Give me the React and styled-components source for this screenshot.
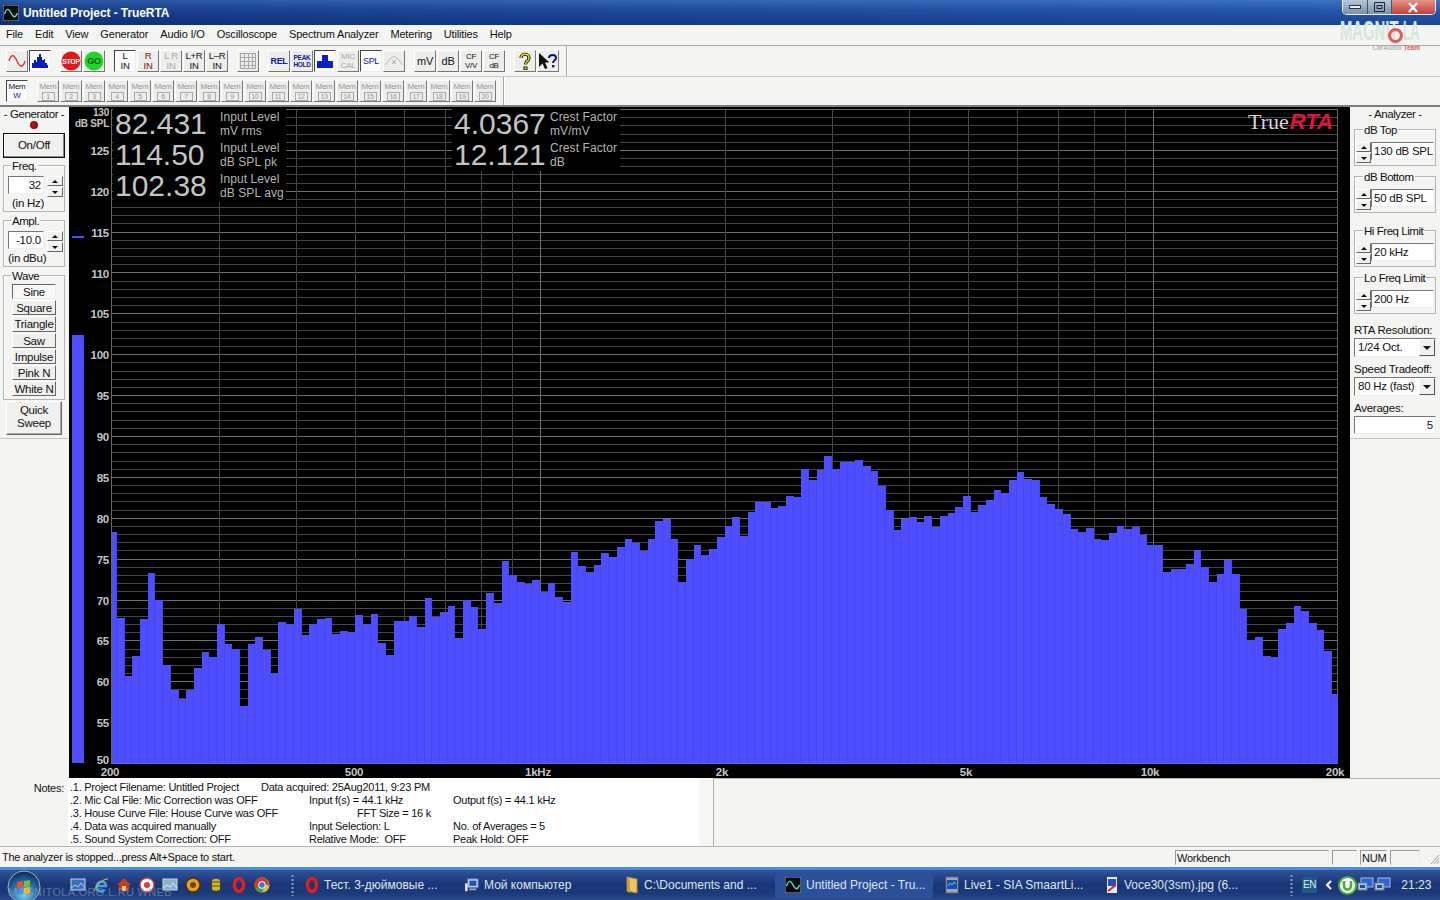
import React from "react";
import styled, { createGlobalStyle } from "styled-components";

const GlobalStyle = createGlobalStyle`
  html, body { margin: 0; padding: 0; background: #f4f4f2; }
  * { box-sizing: border-box; }
`;

const Window = styled.div`
  position: relative;
  width: 1440px;
  height: 900px;
  overflow: hidden;
  display: flex;
  flex-direction: column;
  background: #f4f4f2;
  color: #111;
  font: 11.5px/14px "Liberation Sans", Arial, sans-serif;
  letter-spacing: -0.25px;
`;

/* title bar */
const TitleBar = styled.div`
  height: 25px;
  flex: none;
  display: flex;
  align-items: center;
  padding-left: 3px;
  gap: 4px;
  color: #fff;
  font-size: 12px;
  font-weight: bold;
  letter-spacing: -0.08px;
  background:
    linear-gradient(90deg, rgba(8, 30, 100, 0.35), rgba(60, 120, 210, 0.25)),
    linear-gradient(180deg, #3f74c4 0%, #1f4f9e 40%, #0f3484 100%);
`;
const WinButtons = styled.div`
  margin-left: auto;
  margin-right: 4px;
  align-self: flex-start;
  width: 94px;
  height: 15px;
  display: flex;
  border: 1px solid #e8eef8;
  border-top: none;
  border-radius: 0 0 5px 5px;
  overflow: hidden;
`;
const WinBtn = styled.div`
  width: ${p => p.$w}px;
  display: flex;
  align-items: center;
  justify-content: center;
  background: ${p => p.$close
    ? "linear-gradient(180deg,#e89088,#c2413a)"
    : "linear-gradient(180deg,#b8c8d8,#7890a8)"};
  border-right: 1px solid #47586c;
  &:last-child { border-right: none; }
`;

/* menu */
const MenuBar = styled.div`
  height: 21px;
  flex: none;
  display: flex;
  align-items: center;
  gap: 12px;
  padding: 0 0 2px 6px;
  border-bottom: 1px solid #a9a9a9;
  font-size: 11px;
  letter-spacing: -0.17px;
`;

/* toolbars */
const ToolRow = styled.div`
  height: ${p => p.$h}px;
  flex: none;
  display: flex;
  align-items: center;
  gap: 9px;
  padding-left: 6px;
  border-bottom: ${p => (p.$line ? "1px solid #c8c8c8" : "none")};
`;
const ToolGroup = styled.div`
  display: flex;
  gap: 1px;
`;
const ToolDivider = styled.div`
  align-self: stretch;
  width: 2px;
  margin-left: -2px;
  border-left: 1px solid #a8a8a8;
  border-right: 1px solid #fff;
`;
const ToolBtn = styled.div`
  width: 22px;
  height: 22px;
  display: flex;
  flex-direction: column;
  align-items: center;
  justify-content: center;
  font-size: ${p => p.$size || 9.5}px;
  line-height: ${p => (p.$size ? p.$size + 1 : 10)}px;
  font-weight: ${p => (p.$bold ? "bold" : "normal")};
  letter-spacing: -0.3px;
  white-space: nowrap;
  color: ${p => p.$tone || "#111"};
  background: ${p => (p.$down ? "#fbfbfb" : "#ededeb")};
  border: 1px solid;
  border-color: ${p => (p.$down ? "#444 #eee #eee #444" : "#fff #777 #777 #fff")};
`;
const MemBox = styled.span`
  display: block;
  width: 13px;
  height: 9px;
  margin-top: 1px;
  border: 1px solid #aaa;
  font-size: 7px;
  line-height: 7px;
  text-align: center;
  color: #999;
`;
const MemWLetter = styled.span`
  color: #10189c;
`;

/* main area */
const Main = styled.div`
  height: 673px;
  flex: none;
  display: flex;
  border-top: 2px solid #7c7c7c;
`;
const Panel = styled.div`
  flex: none;
  width: ${p => p.$w}px;
  display: flex;
  flex-direction: column;
  padding: 0 ${p => p.$pr}px 0 ${p => p.$pl}px;
`;
const PanelTitle = styled.div`
  height: 14px;
  text-align: center;
  white-space: nowrap;
  letter-spacing: -0.4px;
`;
const Led = styled.div`
  width: 8px;
  height: 8px;
  margin: 0 auto;
  border-radius: 50%;
  background: radial-gradient(circle at 40% 40%, #b02020, #6a0808);
`;
const PanelEnd = styled.div`
  margin: ${p => p.$mt}px -${p => p.$pl}px 0;
  border-top: 1px solid #c4c4c4;
`;
const BigButton = styled.div`
  flex: none;
  height: ${p => p.$h}px;
  margin: ${p => p.$mt}px ${p => p.$mx || 0}px 0 ${p => p.$mx || 0}px;
  padding-bottom: ${p => p.$pb || 0}px;
  display: flex;
  align-items: center;
  justify-content: center;
  text-align: center;
  line-height: 13px;
  background: #f0f0ee;
  border: 1px solid;
  border-color: ${p => (p.$dark ? "#111" : "#fff #666 #666 #fff")};
  box-shadow: ${p => (p.$dark
    ? "inset -1px -1px 0 #888, inset 1px 1px 0 #fff"
    : "inset -1px -1px 0 #aaa")};
`;
const Group = styled.div`
  position: relative;
  flex: none;
  height: ${p => p.$h}px;
  margin-top: ${p => p.$mt}px;
  padding: ${p => p.$pt}px ${p => p.$px}px 0;
  border: 1px solid #b4b4b4;
  box-shadow: inset 1px 1px 0 #fff;
`;
const Legend = styled.span`
  position: absolute;
  top: -7px;
  left: ${p => p.$left}px;
  padding: 0 1px;
  background: #f4f4f2;
  white-space: nowrap;
  letter-spacing: -0.45px;
`;
const SpinRow = styled.div`
  display: flex;
  align-items: flex-start;
  gap: ${p => p.$gap}px;
`;
const Field = styled.div`
  flex: ${p => (p.$w ? "none" : 1)};
  width: ${p => (p.$w ? p.$w + "px" : "auto")};
  height: 18px;
  padding: 0 2px;
  line-height: 17px;
  text-align: ${p => p.$align || "left"};
  white-space: nowrap;
  overflow: hidden;
  background: #fff;
  border: 1px solid;
  border-color: #777 #eee #eee #777;
`;
const Spin = styled.div`
  flex: none;
  width: ${p => p.$w}px;
  display: flex;
  flex-direction: column;
  gap: 1px;
`;
const SpinBtn = styled.div`
  height: 10px;
  display: flex;
  align-items: center;
  justify-content: center;
  background: #f0f0ee;
  border: 1px solid;
  border-color: #fff #666 #666 #fff;
  &::after {
    content: "";
    border-left: 3px solid transparent;
    border-right: 3px solid transparent;
    ${p => (p.$up ? "border-bottom" : "border-top")}: 3px solid #111;
  }
`;
const Caption = styled.div`
  margin: ${p => p.$mt}px 0 0 ${p => p.$ml}px;
  white-space: nowrap;
`;
const WaveList = styled.div`
  display: flex;
  flex-direction: column;
  gap: 1px;
`;
const WaveBtn = styled.div`
  height: 15.2px;
  line-height: 14px;
  text-align: center;
  white-space: nowrap;
  background: ${p => (p.$down ? "#f8f8f8" : "#efefed")};
  border: 1px solid;
  border-color: ${p => (p.$down ? "#666 #eee #eee #666" : "#fff #666 #666 #fff")};
`;
const FieldLabel = styled.div`
  flex: none;
  height: 15px;
  margin-top: ${p => p.$mt}px;
  white-space: nowrap;
`;
const Select = styled.div`
  flex: none;
  height: 19px;
  display: flex;
  padding-left: 3px;
  line-height: 17px;
  background: #fff;
  border: 1px solid;
  border-color: #777 #eee #eee #777;
`;
const SelectArrow = styled.div`
  width: 16px;
  margin-left: auto;
  display: flex;
  align-items: center;
  justify-content: center;
  background: #f0f0ee;
  border: 1px solid;
  border-color: #fff #555 #555 #fff;
  &::after {
    content: "";
    border-left: 4px solid transparent;
    border-right: 4px solid transparent;
    border-top: 4px solid #111;
  }
`;

/* chart */
const ChartPane = styled.div`
  position: relative;
  flex: 1;
  background: #000;
`;
const ChartSvg = styled.svg`
  display: block;
`;
const Readouts = styled.div`
  position: absolute;
  top: 2px;
  left: ${p => p.$left}px;
  background: #000;
  color: #c4c4c4;
`;
const ReadoutRow = styled.div`
  height: 31px;
  display: flex;
`;
const ReadoutValue = styled.div`
  width: ${p => p.$w}px;
  padding-left: 2px;
  font-size: 30px;
  line-height: 29px;
  letter-spacing: 0;
`;
const ReadoutLabel = styled.div`
  width: ${p => p.$w}px;
  padding-top: 1px;
  font-size: 12px;
  line-height: 14px;
  letter-spacing: 0.08px;
  color: #b4b4b4;
  white-space: nowrap;
`;
const BrandMark = styled.div`
  position: absolute;
  top: 3px;
  right: 17px;
  display: flex;
  align-items: baseline;
  letter-spacing: 0;
  line-height: 24px;
`;
const BrandTrue = styled.span`
  font: 22px/24px "Liberation Serif", "Times New Roman", serif;
  color: #d4d4d4;
`;
const BrandRta = styled.span`
  font: italic bold 22px/24px "Liberation Sans", Arial, sans-serif;
  color: #e5103c;
  margin-left: 1px;
`;

/* notes */
const NotesBar = styled.div`
  height: 69px;
  flex: none;
  display: flex;
  border-bottom: 1px solid #b4b4b4;
`;
const NotesTitle = styled.div`
  width: 68px;
  padding: 3px 4px 0 0;
  text-align: right;
  font-size: 11px;
`;
const NotesBody = styled.div`
  width: 631px;
  padding: 3px 0 0 2px;
  background: #fff;
  font-size: 11px;
  line-height: 13px;
  letter-spacing: -0.25px;
`;
const NotesStrip = styled.div`
  width: 15px;
  background: #f6f6f4;
  border-right: 1px solid #b0b0b0;
`;
const NotesEmpty = styled.div`
  flex: 1;
  border-top: 1px solid #b4b4b4;
`;
const NoteLine = styled.div`
  height: 13px;
  display: flex;
  white-space: nowrap;
`;
const NoteCell = styled.span`
  flex: none;
  width: ${p => p.$w}px;
  padding-left: ${p => p.$pl || 0}px;
`;

/* status bar */
const StatusBar = styled.div`
  height: 20px;
  flex: none;
  display: flex;
  align-items: center;
  padding-left: 2px;
  font-size: 11px;
`;
const StatusPane = styled.div`
  flex: none;
  width: ${p => p.$w}px;
  height: 15px;
  margin-left: ${p => p.$ml}px;
  padding-left: 1px;
  line-height: 14px;
  border: 1px solid;
  border-color: #999 #eee #eee #999;
`;
const StatusText = styled.div`
  width: 1173px;
`;
const Grip = styled.svg`
  margin: 4px 0 0 10px;
`;

/* taskbar */
const TaskBar = styled.div`
  position: relative;
  height: 33px;
  flex: none;
  display: flex;
  align-items: center;
  color: #dfe6f5;
  font-size: 12px;
  letter-spacing: 0;
  border-top: 3px solid #4a8ce0;
  background: linear-gradient(180deg, #2f5298 0%, #1a3574 50%, #1c3a7c 80%, #2a4a8c 100%);
`;
const OrbSlot = styled.div`
  width: 68px;
  flex: none;
  padding-left: 6px;
  display: flex;
`;
const QuickLaunch = styled.div`
  width: 227px;
  flex: none;
  display: flex;
  align-items: center;
  gap: 7px;
  padding-left: 2px;
`;
const Dots = styled.div`
  width: 3px;
  height: 22px;
  margin-left: ${p => p.$ml || 0}px;
  background: radial-gradient(circle, #8fa4c8 1px, transparent 1.2px) 0 0 / 3px 4px;
`;
const TaskButton = styled.div`
  flex: none;
  width: 158px;
  height: 28px;
  margin-right: 2px;
  display: flex;
  align-items: center;
  gap: 5px;
  padding-left: 10px;
  white-space: nowrap;
  border-radius: 2px;
  background: ${p => (p.$active ? "#2b4f98" : "transparent")};
`;
const Tray = styled.div`
  margin-left: 35px;
  display: flex;
  align-items: center;
`;
const TrayLang = styled.span`
  margin-left: 9px;
  padding: 1px;
  font-size: 10px;
  letter-spacing: -0.3px;
  background: #1d5a84;
`;
const TrayGap = styled.span`
  width: ${p => p.$w}px;
`;
const Clock = styled.span`
  margin-left: 10px;
`;
const Watermark = styled.div`
  position: absolute;
  left: 8px;
  top: 15px;
  font-size: 11px;
  letter-spacing: 0.3px;
  color: #8ea4c4;
  opacity: 0.55;
  white-space: nowrap;
`;

/* logo over the menu */
const SiteLogo = styled.div`
  position: absolute;
  left: 1340px;
  top: 20px;
  width: 82px;
  height: 29px;
`;
const SiteWord = styled.div`
  position: absolute;
  top: 0;
  left: ${p => p.$left}px;
  font: bold 28px/22px "Liberation Sans", Arial, sans-serif;
  letter-spacing: 0;
  color: #d4e8dc;
  white-space: pre;
  transform: scaleX(${p => p.$scale});
  transform-origin: left top;
`;
const SiteRing = styled.div`
  position: absolute;
  left: 48px;
  top: 8px;
  width: 15px;
  height: 15px;
  border: 3px solid #e25a50;
  border-radius: 50%;
`;
const SiteTeam = styled.div`
  position: absolute;
  right: 2px;
  top: 24px;
  font: bold 6.5px/7px "Liberation Sans", Arial, sans-serif;
  letter-spacing: 0;
  color: #b8b8b8;
  white-space: nowrap;
  & b { color: #e25a50; }
`;

const SineIcon = ({ color = "#e03030", size = 18 }) => (
  <svg width={size} height={size} viewBox="0 0 18 18">
    <path d="M1 9C3 2 6 2 9 9s6 7 8 0" fill="none" stroke={color} strokeWidth="1.3" />
  </svg>
);
const SpectrumIcon = () => (
  <svg width="18" height="18" viewBox="0 0 18 18">
    <path d="M1 16V11H3V8H5V10H6V5H8V2H10V5H11V8H13V7H14V11H16V13H17V16Z" fill="#0a1fb8" />
  </svg>
);
const SignIcon = ({ fill, label, color }) => (
  <svg width="20" height="20" viewBox="0 0 20 20">
    <circle cx="10" cy="10" r="9.5" fill={fill} />
    <text x="10" y="13" textAnchor="middle" fontSize={label.length > 2 ? 7 : 9} fontWeight="bold"
      fontFamily="Liberation Sans" fill={color}>{label}</text>
  </svg>
);
const GridIcon = () => (
  <svg width="18" height="18" viewBox="0 0 18 18" shapeRendering="crispEdges">
    <path d="M1.5 1.5h15v15h-15zM5.5 1.5v15M9.5 1.5v15M13.5 1.5v15M1.5 5.5h15M1.5 9.5h15M1.5 13.5h15"
      fill="none" stroke="#a8a8a8" />
  </svg>
);
const BlockIcon = () => (
  <svg width="18" height="18" viewBox="0 0 18 18">
    <path d="M1 16V9H6V3H12V9H17V16Z" fill="#0a1fc8" />
  </svg>
);
const CurveIcon = () => (
  <svg width="20" height="18" viewBox="0 0 20 18">
    <path d="M1 13L7 6Q10 3 13 6L19 13" fill="none" stroke="#bbb" />
    <path d="M8 8l4 4M12 8l-4 4" stroke="#aaa" />
  </svg>
);
const HelpIcon = () => (
  <svg width="18" height="19" viewBox="0 0 18 19">
    <path d="M5 6C5 1 13 1 13 6C13 9 9.5 9 9.5 12.5" fill="none" stroke="#111" strokeWidth="3.2" />
    <path d="M5 6C5 1 13 1 13 6C13 9 9.5 9 9.5 12.5" fill="none" stroke="#f4e020" strokeWidth="1.4" />
    <rect x="7.5" y="14.5" width="4" height="3.5" fill="#111" />
    <rect x="8.5" y="15.3" width="2" height="2" fill="#f4e020" />
  </svg>
);
const WhatIsIcon = () => (
  <svg width="20" height="19" viewBox="0 0 20 19">
    <path d="M1 1V15L4.5 11.5L7 17L9.5 16L7 10.5H11.5Z" fill="#111" />
    <path d="M11 6C11 2 18 2 18 6C18 8.5 15 8.5 15 11" fill="none" stroke="#0d1a70" strokeWidth="2" />
    <rect x="14" y="13" width="2.4" height="2.4" fill="#0d1a70" />
  </svg>
);
const AppIcon = ({ size = 16 }) => (
  <svg width={size} height={size} viewBox="0 0 16 16">
    <rect width="16" height="16" fill="#0a0a0a" stroke="#9aa" />
    <path d="M1.5 9C3.5 3 5.5 3 8 8s4.5 5 6.5 0" fill="none" stroke="#4fe0d0" strokeWidth="1.4" />
  </svg>
);
const OperaIcon = ({ size = 14 }) => (
  <svg width={size} height={16} viewBox="0 0 14 16">
    <ellipse cx="7" cy="8" rx="4.6" ry="6.4" fill="none" stroke="#e0201c" strokeWidth="3.4" />
  </svg>
);
const FolderIcon = () => (
  <svg width="14" height="18" viewBox="0 0 14 18">
    <path d="M2 1L12 3V17L2 15Z" fill="#e8c860" stroke="#a8882c" />
    <path d="M2 1V15L5 17V4Z" fill="#c8a03c" />
  </svg>
);
const PcIcon = () => (
  <svg width="14" height="16" viewBox="0 0 16 16">
    <rect x="3" y="1" width="12" height="10" fill="#c4d4ec" stroke="#5a78a8" />
    <rect x="5" y="3" width="8" height="6" fill="#1c54c8" />
    <rect x="0" y="6" width="3" height="9" fill="#d8dce4" />
    <rect x="5" y="12" width="8" height="2" fill="#a0acbc" />
  </svg>
);
const LiveIcon = () => (
  <svg width="14" height="18" viewBox="0 0 14 18">
    <rect x="1" y="1" width="12" height="16" fill="#9aa8b8" stroke="#667" />
    <rect x="2" y="4" width="10" height="9" fill="#1a48c8" />
    <path d="M3 10l2-3 2 2 2-3 2 2" fill="none" stroke="#50e060" />
  </svg>
);
const PictureIcon = () => (
  <svg width="14" height="18" viewBox="0 0 14 18">
    <path d="M2 1H12V17H2Z" fill="#e8ecf4" />
    <rect x="3" y="3" width="8" height="7" fill="#2850b8" />
    <path d="M3 15L11 9" stroke="#d02828" strokeWidth="2" />
  </svg>
);
const StartOrb = () => (
  <svg width="36" height="30" viewBox="0 0 36 30">
    <defs>
      <radialGradient id="orb" cx="50%" cy="75%" r="70%">
        <stop offset="0" stopColor="#7ed0f0" />
        <stop offset="0.55" stopColor="#2a70a8" />
        <stop offset="1" stopColor="#0f3060" />
      </radialGradient>
    </defs>
    <circle cx="18" cy="17" r="16" fill="url(#orb)" stroke="#9ab4cc" />
    <path d="M11 12l6-1v6l-6 1z" fill="#e8502c" />
    <path d="M18 11l6-1v6l-6 1z" fill="#70c040" />
    <path d="M11 19l6-1v6l-6 1z" fill="#3090e0" />
    <path d="M18 18l6-1v6l-6 1z" fill="#f4c020" />
  </svg>
);
const Dot = ({ fill, ring, inner }) => (
  <svg width="16" height="16" viewBox="0 0 16 16">
    <circle cx="8" cy="8" r="7" fill={fill} stroke={ring} strokeWidth="1.4" />
    {inner && <circle cx="8" cy="8" r="3" fill={inner} />}
  </svg>
);
const TileIcon = ({ fill, line }) => (
  <svg width="16" height="16" viewBox="0 0 16 16">
    <rect x="1" y="2" width="14" height="11" fill={fill} stroke="#c8d4e4" />
    <path d="M1 11l4-3 3 2 3-4 4 5" fill="none" stroke={line} />
  </svg>
);
const IeIcon = () => (
  <svg width="16" height="16" viewBox="0 0 16 16">
    <path d="M3 9h10C13 4 6 3 4 8s3 8 8 5" fill="none" stroke="#4aa0e8" strokeWidth="2.4" />
    <path d="M1 14C4 7 10 2 15 2" fill="none" stroke="#f0c040" />
  </svg>
);
const HouseIcon = () => (
  <svg width="16" height="16" viewBox="0 0 16 16">
    <path d="M8 1l7 7h-2v6H3V8H1z" fill="#c83a20" />
    <rect x="6" y="9" width="4" height="5" fill="#f4d060" />
  </svg>
);
const BugIcon = () => (
  <svg width="16" height="16" viewBox="0 0 14 16">
    <rect x="3" y="2" width="8" height="12" rx="3" fill="#d8b820" />
    <path d="M0 5h14M0 9h14M3 14h8" stroke="#5a4808" />
  </svg>
);
const ChromeIcon = () => (
  <svg width="16" height="16" viewBox="0 0 16 16">
    <circle cx="8" cy="8" r="7.5" fill="#e0c030" />
    <path d="M8 .5A7.5 7.5 0 0 0 1.5 12L8 8h7A7.5 7.5 0 0 0 8 .5z" fill="#d83828" />
    <path d="M1.5 12A7.5 7.5 0 0 0 8 15.5L11 9 8 8z" fill="#40a048" />
    <circle cx="8" cy="8" r="3.4" fill="#3a78d8" stroke="#fff" />
  </svg>
);
const TorrentIcon = () => (
  <svg width="19" height="19" viewBox="0 0 19 19">
    <circle cx="9.5" cy="9.5" r="8.5" fill="#fff" stroke="#48b030" strokeWidth="2" />
    <path d="M6 5v5a3.5 3.5 0 0 0 7 0V5" fill="none" stroke="#48b030" strokeWidth="2.6" />
  </svg>
);
const NetIcon = () => (
  <svg width="17" height="16" viewBox="0 0 17 16">
    <rect x="4" y="1" width="12" height="9" fill="#2a64d8" stroke="#a8bcd8" />
    <rect x="1" y="6" width="9" height="7" fill="#b8c4d4" stroke="#6a7c98" />
    <rect x="3" y="8" width="5" height="3" fill="#1c48a8" />
  </svg>
);
const Chevron = () => (
  <svg width="10" height="12" viewBox="0 0 10 12">
    <path d="M7 2L3 6l4 4" fill="none" stroke="#fff" strokeWidth="2" />
  </svg>
);

const tool = (children, props = {}) => ({ children, props });
const twoLine = (a, b, props) => tool(<><span>{a}</span><span>{b}</span></>, props);

const toolGroups = [
  [tool(<SineIcon />), tool(<SpectrumIcon />, { $down: true })],
  [tool(<SignIcon fill="#e01818" label="STOP" color="#fff" />), tool(<SignIcon fill="#22d628" label="GO" color="#0a5a10" />)],
  [
    twoLine("L", "IN", { $down: true }),
    twoLine("R", "IN", { $tone: "#8a1010" }),
    twoLine("L  R", "IN", { $tone: "#aaa" }),
    twoLine("L+R", "IN"),
    twoLine("L–R", "IN"),
  ],
  [tool(<GridIcon />)],
  [
    tool("REL", { $bold: true, $size: 9, $tone: "#10189c" }),
    twoLine("PEAK", "HOLD", { $bold: true, $size: 6.5, $tone: "#10189c" }),
    tool(<BlockIcon />, { $down: true }),
    twoLine("MIC", "CAL", { $size: 8, $tone: "#aaa" }),
    tool("SPL", { $down: true, $size: 9, $tone: "#10189c" }),
    tool(<CurveIcon />),
  ],
  [
    tool("mV", { $size: 11 }),
    tool("dB", { $size: 11 }),
    twoLine("CF", "V/V", { $size: 8 }),
    twoLine("CF", "dB", { $size: 8 }),
  ],
  [tool(<HelpIcon />), tool(<WhatIsIcon />)],
];

const memSlots = Array.from({ length: 20 }, (_, i) => i + 1);

const menus = ["File", "Edit", "View", "Generator", "Audio I/O", "Oscilloscope", "Spectrum Analyzer", "Metering", "Utilities", "Help"];
const waves = ["Sine", "Square", "Triangle", "Saw", "Impulse", "Pink N", "White N"];

const PLOT_LEFT = 112;
const PLOT_RIGHT = 1338;
const PLOT_TOP = 109;
const PLOT_BOTTOM = 763;
const DB_PX = 8.175;
const BAR_STEP = 7.69;

// bar tops read off the picture, in page pixels
const barTops = [
  532, 618, 676, 656, 619, 573, 600, 665, 690, 699, 690, 668, 652, 657, 624, 644, 649, 706, 644, 637,
  650, 673, 622, 624, 609, 635, 624, 619, 618, 634, 631, 632, 615, 624, 614, 643, 655, 621, 621, 616,
  627, 598, 617, 612, 606, 638, 600, 607, 629, 593, 603, 561, 575, 582, 584, 580, 592, 583, 597, 602,
  552, 566, 572, 565, 553, 557, 547, 539, 543, 551, 539, 521, 519, 539, 582, 559, 545, 555, 549, 537,
  526, 517, 536, 512, 502, 502, 508, 506, 496, 497, 469, 480, 470, 456, 469, 462, 462, 460, 466, 471,
  486, 510, 530, 519, 517, 522, 516, 527, 516, 513, 507, 496, 512, 505, 500, 490, 493, 480, 472, 479,
  480, 497, 504, 509, 514, 529, 532, 528, 539, 540, 533, 526, 529, 527, 535, 545, 545, 572, 569, 569,
  564, 550, 567, 582, 574, 560, 574, 609, 640, 637, 656, 657, 629, 623, 606, 611, 623, 630, 651, 694,
];

const dbY = db => PLOT_BOTTOM - (db - 50) * DB_PX;
const freqX = f => PLOT_LEFT + ((PLOT_RIGHT - PLOT_LEFT) / 2) * Math.log10(f / 200);

const dbLines = Array.from({ length: 81 }, (_, i) => 50 + i);
const dbLabels = Array.from({ length: 16 }, (_, i) => 50 + i * 5);
const freqLines = [300, 400, 500, 600, 700, 800, 900, 1000, 2000, 3000, 4000, 5000, 6000, 7000, 8000, 9000, 10000];
const freqLabels = [["200", 110], ["500", 354], ["1kHz", 538], ["2k", 722], ["5k", 966], ["10k", 1150], ["20k", 1335]];
const axisText = { fontFamily: "Liberation Sans", fontWeight: "bold", fontSize: 11.5, fill: "#c4c4c4" };
const topAxisText = { ...axisText, fontSize: 10 };

const Chart = () => (
  <ChartSvg width="1281" height="671" viewBox="69 107 1281 671">
    <g shapeRendering="crispEdges">
      {dbLines.map(db => (
        <line key={db} x1={PLOT_LEFT} x2={PLOT_RIGHT} y1={Math.round(dbY(db))} y2={Math.round(dbY(db))}
          stroke={db % 5 === 0 ? "#6e6e6e" : "#464646"} />
      ))}
      {freqLines.map(f => (
        <line key={f} x1={freqX(f)} x2={freqX(f)} y1={PLOT_TOP} y2={PLOT_BOTTOM}
          stroke={f === 1000 || f === 10000 ? "#6e6e6e" : "#444"} />
      ))}
      <rect x={PLOT_LEFT - 0.5} y={PLOT_TOP} width={PLOT_RIGHT - PLOT_LEFT} height={PLOT_BOTTOM - PLOT_TOP}
        fill="none" stroke="#666" />
      {barTops.map((top, i) => {
        const x = i === 0 ? PLOT_LEFT : 117 + (i - 1) * BAR_STEP;
        const next = Math.min(117 + i * BAR_STEP, PLOT_RIGHT);
        return (
          <g key={i}>
            <rect x={x} y={top} width={next - x} height={PLOT_BOTTOM + 1 - top} fill="#4e4eff" />
            <rect x={next - 1} y={top + 1} width="1" height={PLOT_BOTTOM - top} fill="#4646f6" />
          </g>
        );
      })}
      <rect x={PLOT_LEFT} y={PLOT_BOTTOM} width={PLOT_RIGHT - PLOT_LEFT} height="1" fill="#5c5cff" />
      <rect x="72" y="335" width="12" height="428" fill="#4e4eff" />
      <rect x="72" y="236" width="12" height="2" fill="#4e4eff" />
    </g>
    {dbLabels.map(db => (
      <text key={db} x="109" y={db === 50 ? 764 : dbY(db) + 5} textAnchor="end" {...axisText}>{db}</text>
    ))}
    <text x="109" y="116" textAnchor="end" {...topAxisText}>130</text>
    <text x="109" y="127" textAnchor="end" {...topAxisText}>dB SPL</text>
    {freqLabels.map(([label, x]) => (
      <text key={label} x={x} y="776" textAnchor="middle" {...axisText}>{label}</text>
    ))}
  </ChartSvg>
);

const SpinField = ({ label, value, legendLeft, mt }) => (
  <Group $h={37} $mt={mt} $pt={12} $px={1}>
    <Legend $left={legendLeft}>{label}</Legend>
    <SpinRow $gap={0}>
      <Spin $w={15}>
        <SpinBtn $up />
        <SpinBtn />
      </Spin>
      <Field>{value}</Field>
    </SpinRow>
  </Group>
);

const GenField = ({ label, value, note, legendLeft, noteLeft, mt }) => (
  <Group $h={47} $mt={mt} $pt={10} $px={4}>
    <Legend $left={legendLeft}>{label}</Legend>
    <SpinRow $gap={3}>
      <Field $w={36} $align="right">{value}</Field>
      <Spin $w={16}>
        <SpinBtn $up />
        <SpinBtn />
      </Spin>
    </SpinRow>
    <Caption $mt={-1} $ml={noteLeft}>{note}</Caption>
  </Group>
);

const App = () => (
  <Window>
    <GlobalStyle />

    <TitleBar>
      <AppIcon />
      Untitled Project - TrueRTA
      <WinButtons>
        <WinBtn $w={26}>
          <svg width="12" height="6" viewBox="0 0 12 6"><rect x=".5" y="1.5" width="11" height="3" fill="#e8eef4" stroke="#334" /></svg>
        </WinBtn>
        <WinBtn $w={24}>
          <svg width="11" height="10" viewBox="0 0 11 10"><path d="M.5.5h10v9H.5zM3 3.5h5v3H3z" fill="none" stroke="#223" /></svg>
        </WinBtn>
        <WinBtn $w={44} $close>
          <svg width="12" height="11" viewBox="0 0 12 11"><path d="M2 1l8 9M10 1l-8 9" stroke="#fff" strokeWidth="2.4" /></svg>
        </WinBtn>
      </WinButtons>
    </TitleBar>

    <MenuBar>
      {menus.map(m => <span key={m}>{m}</span>)}
    </MenuBar>

    <ToolRow $h={31} $line>
      {toolGroups.map((group, g) => (
        <ToolGroup key={g}>
          {group.map((t, i) => <ToolBtn key={i} {...t.props}>{t.children}</ToolBtn>)}
        </ToolGroup>
      ))}
      <ToolDivider />
    </ToolRow>

    <ToolRow $h={28}>
      <ToolBtn $down $size={8}>
        <span>Mem</span>
        <MemWLetter>W</MemWLetter>
      </ToolBtn>
      <ToolGroup>
        {memSlots.map(n => (
          <ToolBtn key={n} $size={8} $tone="#999">
            <span>Mem</span>
            <MemBox>{n}</MemBox>
          </ToolBtn>
        ))}
      </ToolGroup>
      <ToolDivider />
    </ToolRow>

    <Main>
      <Panel $w={69} $pl={3} $pr={4}>
        <PanelTitle>- Generator -</PanelTitle>
        <Led />
        <BigButton $dark $h={25} $mt={4}>On/Off</BigButton>
        <GenField mt={7} label="Freq." value="32" note="(in Hz)" legendLeft={7} noteLeft={4} />
        <GenField mt={8} label="Ampl." value="-10.0" note="(in dBu)" legendLeft={7} noteLeft={0} />
        <Group $h={125} $mt={8} $pt={8} $px={8}>
          <Legend $left={7}>Wave</Legend>
          <WaveList>
            {waves.map((w, i) => <WaveBtn key={w} $down={i === 0}>{w}</WaveBtn>)}
          </WaveList>
        </Group>
        <BigButton $h={34} $mt={1} $mx={3} $pb={2}>Quick<br />Sweep</BigButton>
        <PanelEnd $mt={3} $pl={3} />
      </Panel>

      <ChartPane>
        <Chart />
        <Readouts $left={44}>
          {[["82.431", "mV rms"], ["114.50", "dB SPL pk"], ["102.38", "dB SPL avg"]].map(([v, l]) => (
            <ReadoutRow key={l}>
              <ReadoutValue $w={107}>{v}</ReadoutValue>
              <ReadoutLabel $w={66}>Input Level<br />{l}</ReadoutLabel>
            </ReadoutRow>
          ))}
        </Readouts>
        <Readouts $left={383}>
          {[["4.0367", "mV/mV"], ["12.121", "dB"]].map(([v, l]) => (
            <ReadoutRow key={l}>
              <ReadoutValue $w={98}>{v}</ReadoutValue>
              <ReadoutLabel $w={70}>Crest Factor<br />{l}</ReadoutLabel>
            </ReadoutRow>
          ))}
        </Readouts>
        <BrandMark>
          <BrandTrue>True</BrandTrue>
          <BrandRta>RTA</BrandRta>
        </BrandMark>
      </ChartPane>

      <Panel $w={90} $pl={4} $pr={4}>
        <PanelTitle>- Analyzer -</PanelTitle>
        <SpinField mt={8} label="dB Top" value="130 dB SPL" legendLeft={8} />
        <SpinField mt={10} label="dB Bottom" value="50 dB SPL" legendLeft={8} />
        <SpinField mt={17} label="Hi Freq Limit" value="20 kHz" legendLeft={8} />
        <SpinField mt={10} label="Lo Freq Limit" value="200 Hz" legendLeft={8} />
        <FieldLabel $mt={9}>RTA Resolution:</FieldLabel>
        <Select>1/24 Oct.<SelectArrow /></Select>
        <FieldLabel $mt={5}>Speed Tradeoff:</FieldLabel>
        <Select>80 Hz (fast)<SelectArrow /></Select>
        <FieldLabel $mt={5}>Averages:</FieldLabel>
        <Field $w={82} $align="right">5</Field>
        <PanelEnd $mt={4} $pl={4} />
      </Panel>
    </Main>

    <NotesBar>
      <NotesTitle>Notes:</NotesTitle>
      <NotesBody>
        <NoteLine>
          <NoteCell $w={191}>.1. Project Filename: Untitled Project</NoteCell>
          <NoteCell $w={300}>Data acquired: 25Aug2011, 9:23 PM</NoteCell>
        </NoteLine>
        <NoteLine>
          <NoteCell $w={239}>.2. Mic Cal File: Mic Correction was OFF</NoteCell>
          <NoteCell $w={144}>Input f(s) = 44.1 kHz</NoteCell>
          <NoteCell $w={140}>Output f(s) = 44.1 kHz</NoteCell>
        </NoteLine>
        <NoteLine>
          <NoteCell $w={239}>.3. House Curve File: House Curve was OFF</NoteCell>
          <NoteCell $w={144} $pl={48}>FFT Size = 16 k</NoteCell>
        </NoteLine>
        <NoteLine>
          <NoteCell $w={239}>.4. Data was acquired manually</NoteCell>
          <NoteCell $w={144}>Input Selection: L</NoteCell>
          <NoteCell $w={140}>No. of Averages = 5</NoteCell>
        </NoteLine>
        <NoteLine>
          <NoteCell $w={239}>.5. Sound System Correction: OFF</NoteCell>
          <NoteCell $w={144}>Relative Mode:&nbsp; OFF</NoteCell>
          <NoteCell $w={140}>Peak Hold: OFF</NoteCell>
        </NoteLine>
      </NotesBody>
      <NotesStrip />
      <NotesEmpty />
    </NotesBar>

    <StatusBar>
      <StatusText>The analyzer is stopped...press Alt+Space to start.</StatusText>
      <StatusPane $w={154} $ml={0}>Workbench</StatusPane>
      <StatusPane $w={25} $ml={3} />
      <StatusPane $w={27} $ml={3}>NUM</StatusPane>
      <StatusPane $w={30} $ml={3} />
      <Grip width="10" height="11" viewBox="0 0 10 11">
        <path d="M1 10L9 1M4 10L9 4M7 10L9 7" stroke="#a0a0a0" fill="none" />
      </Grip>
    </StatusBar>

    <TaskBar>
      <OrbSlot><StartOrb /></OrbSlot>
      <QuickLaunch>
        <TileIcon fill="#3a70b8" line="#a8d0f0" />
        <IeIcon />
        <HouseIcon />
        <Dot fill="#fff" ring="#d04040" inner="#d04040" />
        <TileIcon fill="#8ab0c8" line="#e0eef4" />
        <Dot fill="#e8a020" ring="#503008" inner="#704808" />
        <BugIcon />
        <OperaIcon size={16} />
        <ChromeIcon />
        <Dots $ml={14} />
      </QuickLaunch>
      <TaskButton><OperaIcon />Тест. 3-дюймовые ...</TaskButton>
      <TaskButton><PcIcon />Мой компьютер</TaskButton>
      <TaskButton><FolderIcon />C:\Documents and ...</TaskButton>
      <TaskButton $active><AppIcon />Untitled Project - Tru...</TaskButton>
      <TaskButton><LiveIcon />Live1 - SIA SmaartLi...</TaskButton>
      <TaskButton><PictureIcon />Voce30(3sm).jpg (6...</TaskButton>
      <Tray>
        <Dots />
        <TrayLang>EN</TrayLang>
        <TrayGap $w={7} />
        <Chevron />
        <TrayGap $w={4} />
        <TorrentIcon />
        <NetIcon />
        <NetIcon />
        <Clock>21:23</Clock>
      </Tray>
      <Watermark>MAGNITOLA.ORG.L.RU WNEB</Watermark>
    </TaskBar>

    <SiteLogo>
      <SiteWord $left={0} $scale={0.53}>MAGNIT</SiteWord>
      <SiteWord $left={63} $scale={0.44}>LA</SiteWord>
      <SiteRing />
      <SiteTeam>CarAudio <b>Team</b></SiteTeam>
    </SiteLogo>
  </Window>
);

export default App;
